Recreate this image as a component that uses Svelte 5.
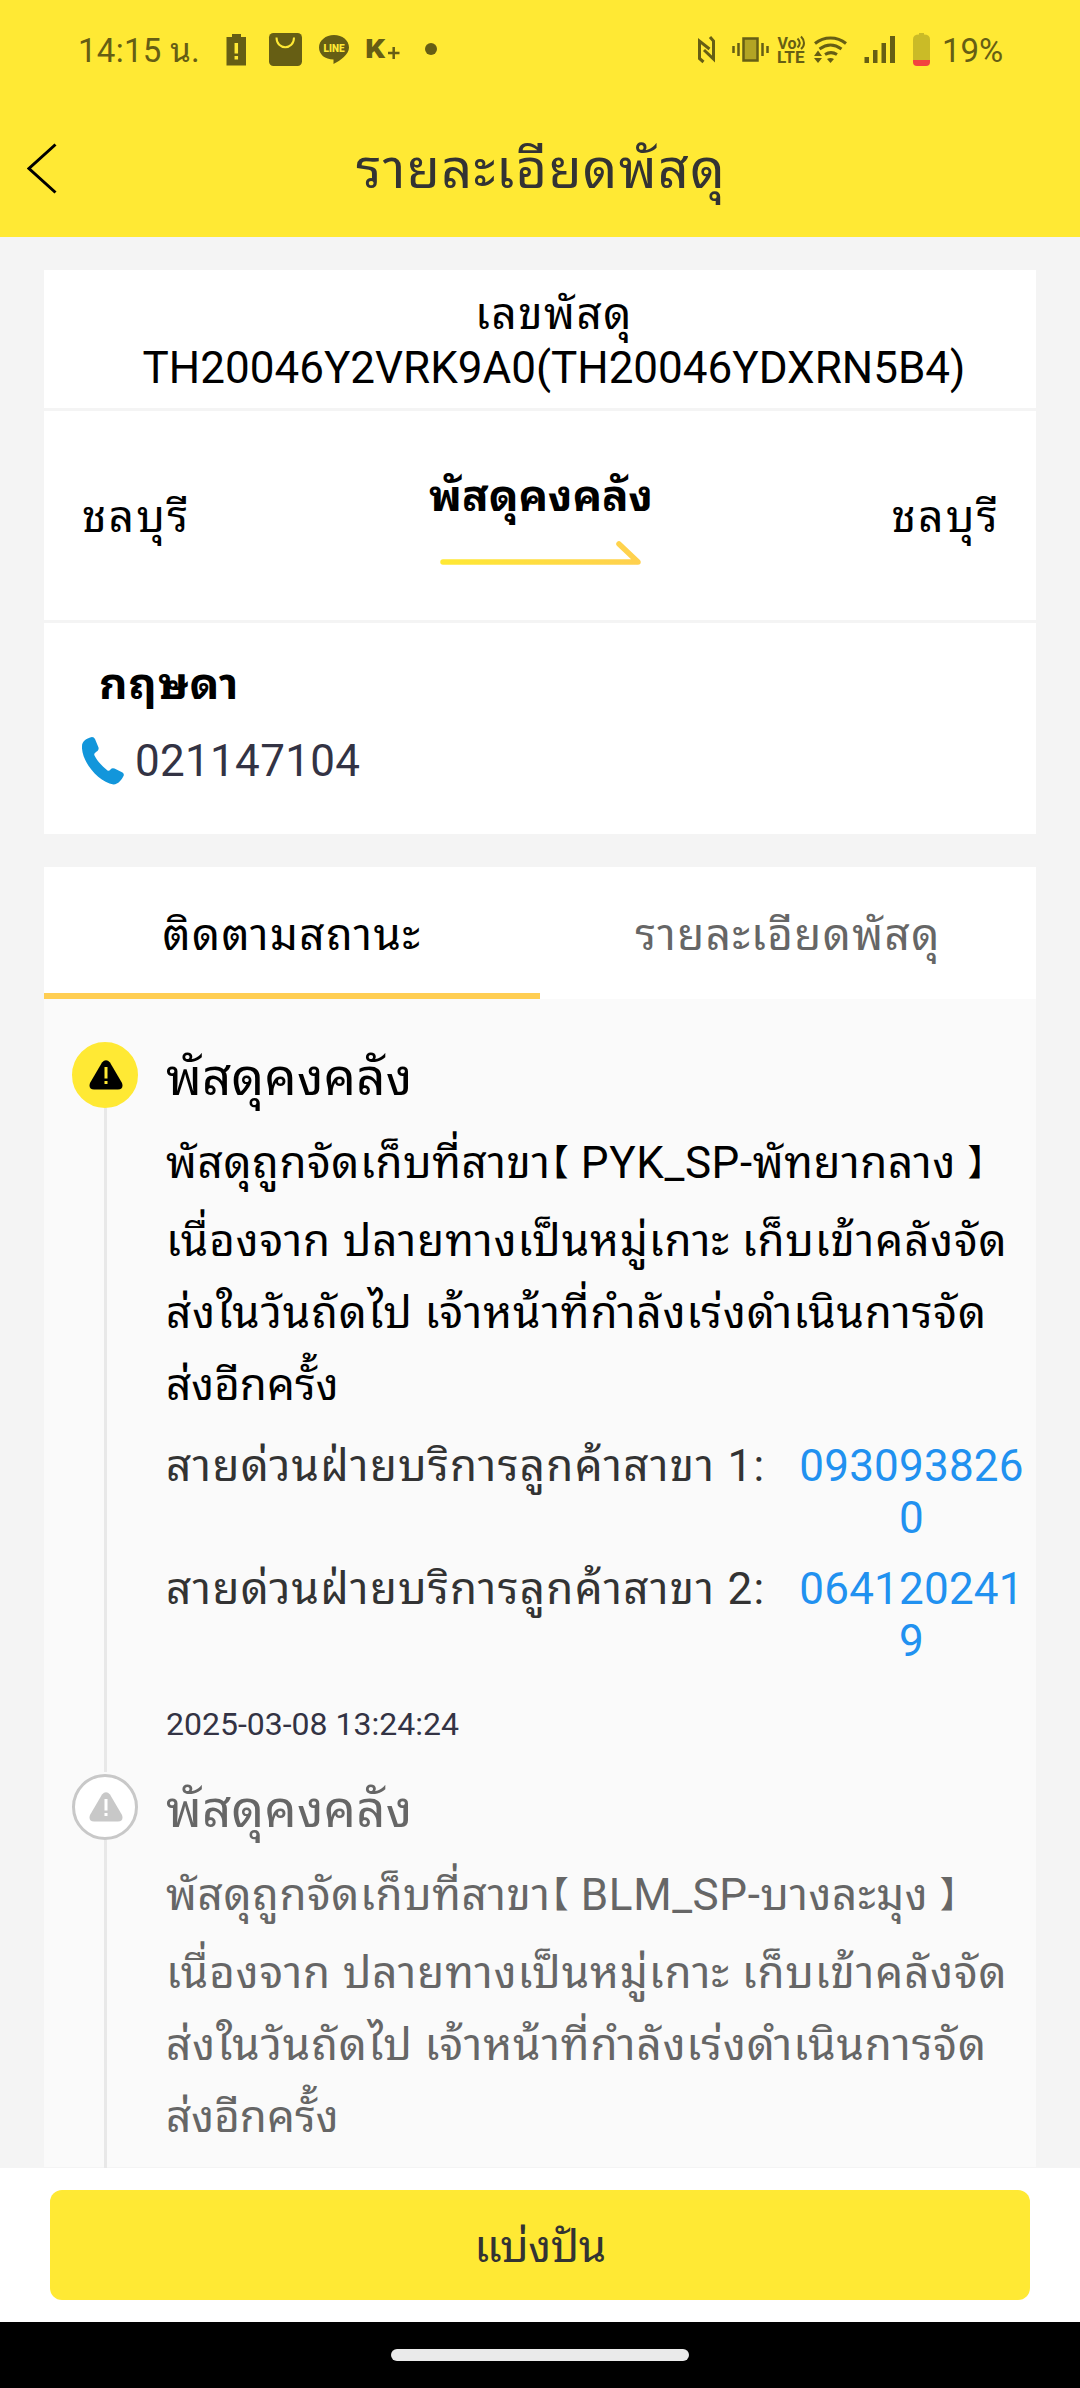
<script lang="ts">
  type Event = {
    title: string
    branch: string
    reason: string[]
    hotlines: string[]
    time: string
    active: boolean
  }

  const reason = [
    'เนื่องจาก ปลายทางเป็นหมู่เกาะ เก็บเข้าคลังจัด',
    'ส่งในวันถัดไป เจ้าหน้าที่กำลังเร่งดำเนินการจัด',
    'ส่งอีกครั้ง',
  ]

  const events: Event[] = [
    {
      title: 'พัสดุคงคลัง',
      branch: 'PYK_SP-พัทยากลาง',
      reason,
      hotlines: ['0930938260', '0641202419'],
      time: '2025-03-08 13:24:24',
      active: true,
    },
    {
      title: 'พัสดุคงคลัง',
      branch: 'BLM_SP-บางละมุง',
      reason,
      hotlines: [],
      time: '',
      active: false,
    },
  ]

  const tabs = ['ติดตามสถานะ', 'รายละเอียดพัสดุ']
  let current = 0
</script>

<div class="screen">
  <header>
    <div class="status">
      <span class="clock">14:15 น.</span>
      <svg class="left-icons" width="225" height="50" viewBox="215 25 225 50">
        <path d="M232 34h9v3h5v28.500h-19.500V37h5.500z" fill="#665e14" />
        <path d="M236.300 43v10.500M236.300 56v3.500" stroke="#ffe934" stroke-width="3.500" />
        <rect x="269" y="33" width="33" height="33" rx="4.500" fill="#665e14" />
        <path d="M276.500 37.500c0 13 17.500 13 17.500 0" fill="none" stroke="#ffe934" stroke-width="2" />
        <path d="M334 35c8.300 0 15 5.300 15 12.500 0 7-8.500 13-15.500 16.500v-4.500c-8.500 0-14.500-5-14.500-12S325.700 35 334 35z" fill="#665e14" />
        <text x="323.500" y="52" class="line-mark" textLength="21" lengthAdjust="spacingAndGlyphs">LINE</text>
        <text x="365" y="58" class="k-mark" textLength="20" lengthAdjust="spacingAndGlyphs">K</text>
        <path d="M388 53h11.500M393.700 47v12" stroke="#665e14" stroke-width="2.500" />
        <circle cx="431" cy="49" r="6" fill="#665e14" />
      </svg>
      <svg class="right-icons" width="245" height="50" viewBox="690 25 245 50" fill="none" stroke="#665e14">
        <path d="M703.500 62l-4-3.500V41l10 8M704 50l9.500 9V41l-3.500-4" stroke-width="3" />
        <rect x="743.500" y="38.500" width="14" height="22" fill="#b2a424" stroke-width="2.500" />
        <path d="M738.500 43v13M733.500 46v7M762.500 43v13M767.500 46v7" stroke-width="2.500" />
        <text x="777.500" y="48.500" class="volte">Vo</text>
        <path d="M797.500 38.500c3 3 3 6 0 9M801 36.500c4 4 4 9 0 12.500" stroke-width="2" />
        <text x="777" y="62.800" class="volte" textLength="27.500" lengthAdjust="spacingAndGlyphs">LTE</text>
        <path d="M815 43.500c9-7.500 22-7.500 31 0M819.500 49c7-5 15-5 22 0M825 54.500c4-2.500 8-2.500 12 0" stroke-width="3" />
        <path d="M827 59q3.500-2 7 0l-3.500 4zM814 56h8l-4-5.500zM814 58h8l-4 5z" fill="#665e14" stroke="none" />
        <path d="M864.500 57h4.500v6h-4.500zM873 50h4.500v13H873zM881.500 43h4.500v20h-4.500zM890 36h5v27h-5z" fill="#665e14" stroke="none" />
        <path d="M919 33h5v1.500q6 0 6 5V60h-17V39.500q0-5 6-5z" fill="#cabb27" stroke="none" />
        <path d="M913 60h17v2q0 4-4 4h-9q-4 0-4-4z" fill="#f2443f" stroke="none" />
      </svg>
      <span class="percent">19%</span>
    </div>
    <div class="nav">
      <svg class="back" width="32" height="54" viewBox="0 0 32 54">
        <path d="M28.500 2.500L2 26.500l26.500 24" fill="none" stroke="#000" stroke-width="3" />
      </svg>
      <h1>รายละเอียดพัสดุ</h1>
    </div>
  </header>

  <main>
    <section class="summary">
      <div class="number">
        <div class="label">เลขพัสดุ</div>
        <div>TH20046Y2VRK9A0(TH20046YDXRN5B4)</div>
      </div>
      <div class="route">
        <span>ชลบุรี</span>
        <div class="state">
          <b>พัสดุคงคลัง</b>
          <svg width="204" height="28" viewBox="0 0 204 28">
            <defs>
              <linearGradient id="arrow" gradientUnits="userSpaceOnUse" x1="0" y1="0" x2="204" y2="0">
                <stop offset="0" stop-color="#ffe934" />
                <stop offset="1" stop-color="#ffd04f" />
              </linearGradient>
            </defs>
            <path d="M4 23h195L180 5" fill="none" stroke="url(#arrow)" stroke-width="5.500" stroke-linecap="round" stroke-linejoin="round" />
          </svg>
        </div>
        <span>ชลบุรี</span>
      </div>
      <div class="courier">
        <b>กฤษดา</b>
        <div class="phone">
          <svg width="42" height="48" viewBox="0 0 42 48">
            <path d="M0 9C0 4 5 1 10 0q2 0 3 2l3.500 8.500q.5 2-1 3.500c-2 1.500-4 2.500-3 4.500 3 6 8 11 13 15q1.500 1 3-1 1.500-2 4-1l8 4q2 1.500 1 3.500c-2 4-5 8-10 8.500C16 45-1 24 0 9z" fill="#1296db" />
          </svg>
          <span>021147104</span>
        </div>
      </div>
    </section>

    <section class="tracking">
      <div class="tabs">
        {#each tabs as tab, i}
          <div class="tab" class:current={i === current}>{tab}</div>
        {/each}
      </div>
      <div class="timeline">
        {#each events as event}
          <div class="event" class:active={event.active}>
            <div class="rail">
              <div class="dot">
                <svg width="34" height="30" viewBox="0 0 34 30">
                  <path class="sign" d="M13 2.500q4-4.500 8 0l12 20.500q2 6-4 6.500H5q-6-.5-4-6.500z" />
                  <path class="mark" d="M17 7v11.500M17 21v3" />
                </svg>
              </div>
              <div class="line"></div>
            </div>
            <div class="detail">
              <h2>{event.title}</h2>
              <p class="branch">พัสดุถูกจัดเก็บที่สาขา<i>【</i> {event.branch} <i>】</i></p>
              {#each event.reason as row}
                <p>{row}</p>
              {/each}
              {#if event.hotlines.length}
                <div class="hotlines">
                  {#each event.hotlines as phone, i}
                    <div class="hotline">
                      <span>สายด่วนฝ่ายบริการลูกค้าสาขา {i + 1}:</span>
                      <a href="tel:{phone}">{phone}</a>
                    </div>
                  {/each}
                </div>
              {/if}
              {#if event.time}
                <time>{event.time}</time>
              {/if}
            </div>
          </div>
        {/each}
      </div>
    </section>
  </main>

  <footer>
    <button>แบ่งปัน</button>
  </footer>
  <div class="gesture"><span></span></div>
</div>

<style>
  :global(body) {
    margin: 0;
  }
  .screen {
    display: flex;
    flex-direction: column;
    width: 1080px;
    height: 2388px;
    overflow: hidden;
    background: #f4f4f4;
    color: #000;
    font-family: Roboto, 'Noto Sans Thai Looped', 'Noto Sans', 'Noto Sans CJK SC', sans-serif;
    font-size: 44px;
    line-height: 54px;
  }
  .screen * {
    box-sizing: border-box;
  }
  h1,
  h2,
  p {
    margin: 0;
    font-weight: 400;
    white-space: nowrap;
  }
  header {
    flex: none;
    height: 237px;
    background: #ffe934;
  }
  .status {
    display: flex;
    height: 100px;
    padding: 25px 76px 25px 78px;
    color: #665e14;
    font-size: 33px;
    line-height: 51px;
    white-space: nowrap;
  }
  .clock {
    width: 137px;
    letter-spacing: 0.3px;
  }
  .right-icons {
    margin-left: auto;
  }
  .percent {
    width: 62px;
    margin-left: 7px;
  }
  .line-mark {
    font: 900 10px Roboto, sans-serif;
    fill: #ffe934;
  }
  .k-mark {
    font: 900 25px Roboto, sans-serif;
    fill: #665e14;
  }
  .volte {
    font: 700 16px Roboto, sans-serif;
    fill: #665e14;
    stroke: none;
  }
  .nav {
    display: flex;
    align-items: center;
    height: 137px;
    padding: 0 27px;
  }
  h1 {
    flex: 1;
    padding: 2px 30px 0 0;
    color: #333;
    font-size: 54px;
    letter-spacing: 1.3px;
    line-height: 72px;
    text-align: center;
  }
  main {
    flex: none;
    height: 1931px;
    padding: 33px 44px 0;
    overflow: hidden;
  }
  .summary {
    height: 564px;
    background: #fff;
  }
  .number {
    height: 141px;
    padding: 17px 0 0 28px;
    border-bottom: 3px solid #f4f4f4;
    text-align: center;
  }
  .label {
    letter-spacing: 1.5px;
  }
  .route {
    display: flex;
    justify-content: space-between;
    height: 212px;
    padding: 79px 36px 0 38px;
    border-bottom: 3px solid #f4f4f4;
  }
  .route span {
    letter-spacing: 2.4px;
  }
  .state {
    display: flex;
    flex-direction: column;
    align-items: center;
    margin-top: -21px;
  }
  .state svg {
    margin-top: 16px;
  }
  .courier {
    padding: 34px 38px;
  }
  .courier b {
    display: block;
    margin-left: 17px;
    letter-spacing: 1px;
  }
  .phone {
    display: flex;
    align-items: center;
    gap: 11px;
    margin-top: 23px;
    color: #333344;
    letter-spacing: 0.3px;
  }
  .tracking {
    height: 1300px;
    margin-top: 33px;
    background: #fafafa;
  }
  .tabs {
    display: flex;
    height: 132px;
    background: #fff;
  }
  .tab {
    flex: 1;
    padding-top: 41px;
    color: #666;
    letter-spacing: 1.4px;
    text-align: center;
  }
  .tab.current {
    border-bottom: 6px solid #ffce53;
    color: #000;
  }
  .timeline {
    padding: 43px 0 0 28px;
  }
  .event {
    display: flex;
    height: 732px;
    color: #666;
  }
  .event.active {
    color: #000;
  }
  .rail {
    display: flex;
    flex-direction: column;
    align-items: center;
    width: 66px;
    margin-right: 28px;
  }
  .dot {
    display: flex;
    flex: none;
    align-items: center;
    justify-content: center;
    width: 66px;
    height: 66px;
    border: 3px solid #c8c8c8;
    border-radius: 50%;
    background: #fff;
  }
  .dot svg {
    margin-left: 2px;
  }
  .active .dot {
    border-color: #ffe934;
    background: #ffe934;
  }
  .sign {
    fill: #c8c8c8;
  }
  .active .sign {
    fill: #000;
  }
  .mark {
    stroke: #fff;
    stroke-width: 3;
  }
  .active .mark {
    stroke: #ffe934;
  }
  .line {
    flex: 1;
    width: 3px;
    margin-bottom: 2px;
    background: #e8e8e8;
  }
  .detail {
    width: 870px;
  }
  h2 {
    font-size: 51px;
    letter-spacing: 0.2px;
    line-height: 72px;
  }
  p {
    letter-spacing: 0.9px;
    line-height: 72px;
  }
  p:last-of-type {
    letter-spacing: 0;
  }
  .branch {
    margin: 13px 0 6px;
    letter-spacing: 0.6px;
  }
  .branch i {
    font-family: 'Noto Sans CJK SC', sans-serif;
    font-size: 36px;
    font-style: normal;
    font-feature-settings: 'halt';
    line-height: 0;
    vertical-align: 2px;
  }
  .hotlines {
    margin: 19px 0 16px;
  }
  .hotline {
    display: flex;
    height: 123px;
    color: #333;
    line-height: 52px;
    white-space: nowrap;
  }
  .hotline span {
    width: 632px;
    letter-spacing: 1.3px;
  }
  .hotline a {
    width: 227px;
    color: #2191f0;
    letter-spacing: 0.2px;
    text-align: center;
    text-decoration: none;
    white-space: normal;
    word-break: break-all;
  }
  time {
    display: block;
    color: #333344;
    font-size: 32px;
    line-height: 44px;
  }
  footer {
    flex: none;
    height: 154px;
    padding: 22px 50px;
    background: #fff;
  }
  button {
    display: block;
    width: 980px;
    height: 110px;
    padding: 3px 0 0;
    border: 0;
    border-radius: 12px;
    background: #ffe934;
    color: #333;
    font: inherit;
    letter-spacing: -0.4px;
  }
  .gesture {
    display: flex;
    flex: 1;
    align-items: center;
    justify-content: center;
    background: #000;
  }
  .gesture span {
    width: 298px;
    height: 12px;
    border-radius: 6px;
    background: #eaeaea;
  }
</style>
